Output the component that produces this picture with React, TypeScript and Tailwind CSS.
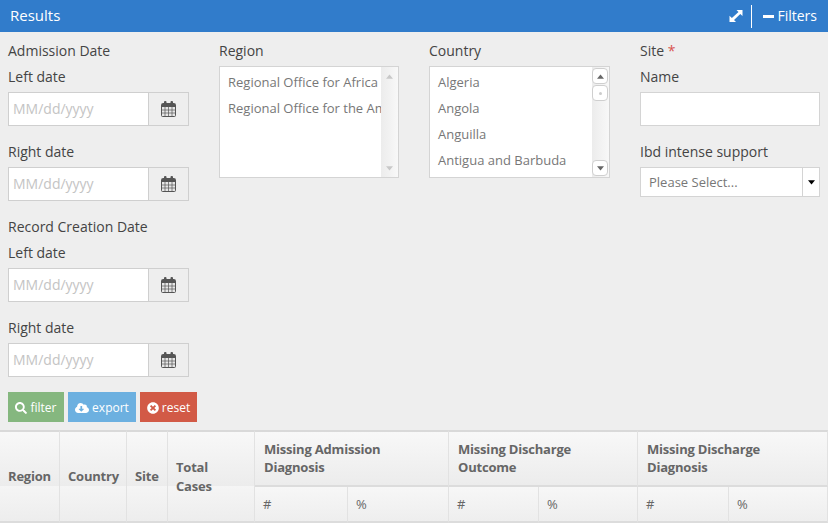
import { FaCloudDownloadAlt, FaSearch, FaTimesCircle } from "react-icons/fa";

function CalendarIcon() {
  return (
    <svg width="15" height="16" viewBox="0 0 15 16" className="text-[#555]">
      <rect x="0.5" y="2.5" width="14" height="13" rx="1" fill="#e6e6e6" stroke="currentColor" />
      <rect x="1" y="3" width="13" height="3" fill="currentColor" />
      <rect x="3" y="0" width="2.5" height="5" rx="1" fill="currentColor" />
      <rect x="9.5" y="0" width="2.5" height="5" rx="1" fill="currentColor" />
      <path d="M4 6v9M7.5 6v9M11 6v9M1 9h13M1 12h13" stroke="currentColor" strokeOpacity="0.7" strokeWidth="1" fill="none" />
    </svg>
  );
}

function Caret({ up, className, width = 7 }: { up?: boolean; className?: string; width?: number }) {
  return (
    <svg width={width} height="5" viewBox="0 0 9 6" fill="currentColor" className={className}>
      <path d={up ? "M4.5 0.5L9 6H0z" : "M0 0h9L4.5 5.5z"} />
    </svg>
  );
}

function DateField({ label }: { label: string }) {
  return (
    <div className="mb-4">
      <div className="mb-[5px] h-5 leading-5">{label}</div>
      <div className="flex h-[34px] border border-[#cfcfcf]">
        <div className="flex-1 bg-white px-[4px] leading-[32px] text-[#c4c4c4]">MM/dd/yyyy</div>
        <div className="flex w-10 items-center justify-center border-l border-[#cfcfcf]">
          <CalendarIcon />
        </div>
      </div>
    </div>
  );
}

function ListBox({ items, active }: { items: string[]; active?: boolean }) {
  return (
    <div className="flex h-[112px] border border-[#d4d4d4] bg-white">
      <div className="min-w-0 flex-1 overflow-hidden px-2 pt-[3px] text-[13px] text-[#777]">
        {items.map((item) => (
          <div key={item} className="h-[26px] whitespace-nowrap leading-[25px]">{item}</div>
        ))}
      </div>
      <div className="flex w-[17px] flex-col items-center justify-between bg-gradient-to-r from-[#ececec] to-[#f8f8f8] py-px pr-px">
        {active ? (
          <>
            <div className="flex w-full flex-col gap-px">
              <div className="flex h-4 items-center justify-center rounded-sm border border-[#cfcfcf] bg-white text-[#666]"><Caret up /></div>
              <div className="flex h-4 items-center justify-center rounded-sm border border-[#cfcfcf] bg-white"><span className="h-[3px] w-[3px] rounded-full bg-[#ccc]" /></div>
            </div>
            <div className="flex h-4 w-full items-center justify-center rounded-sm border border-[#cfcfcf] bg-white text-[#666]"><Caret /></div>
          </>
        ) : (
          <>
            <div className="flex h-4 items-center justify-center text-[#c8c8c8]"><Caret up /></div>
            <div className="flex h-4 items-center justify-center text-[#c8c8c8]"><Caret /></div>
          </>
        )}
      </div>
    </div>
  );
}

const tallCell =
  "border-t-2 border-r border-b-2 border-t-[#d9d9d9] border-r-[#e2e2e2] border-b-[#dcdcdc] bg-[linear-gradient(#f8f8f8,#ececec_54px,#f5f5f5_54px,#ededed)] px-2 text-left align-middle font-bold leading-[19px] tracking-[-0.2px] text-[#666]";
const groupCell =
  "h-[57px] border-t-2 border-r border-b-2 border-t-[#d9d9d9] border-r-[#e2e2e2] border-b-[#dcdcdc] bg-gradient-to-b from-[#f8f8f8] to-[#ececec] pb-px pl-[9px] pr-2 text-left align-middle font-bold leading-[18px] tracking-[-0.2px] text-[#666]";
const subCell =
  "h-[36px] border-r border-b-2 border-r-[#e2e2e2] border-b-[#dcdcdc] bg-gradient-to-b from-[#f7f7f7] to-[#eeeeee] pl-2 text-left align-middle font-normal text-[#666]";

export default function App() {
  return (
    <div className="h-[523px] w-[828px] overflow-hidden bg-[#eeeeee] font-['Open_Sans',sans-serif] text-sm text-[#444]">
      <div className="flex h-8 items-center justify-between bg-[#317ccb] pl-[10px] pr-[11px] text-white">
        <span className="text-[15px]">Results</span>
        <div className="flex items-center">
          <svg width="14" height="14" viewBox="0 0 14 14" fill="white" className="mr-2">
            <path d="M7.5 1H13.5V7L11.3 4.9 5 11 7 13H.5V6.8L2.9 9 9.5 3z" />
          </svg>
          <span className="mr-[11px] h-[23px] w-px bg-white" />
          <span className="mr-[3px] h-[3px] w-[11px] bg-white" />
          <span>Filters</span>
        </div>
      </div>

      <div className="grid grid-cols-[181px_180px_181px_180px] gap-x-[30px] pl-2 pt-[9px]">
        <div>
          <div className="mb-[6px] h-5 leading-5">Admission Date</div>
          <DateField label="Left date" />
          <DateField label="Right date" />
          <div className="mb-[6px] h-5 leading-5">Record Creation Date</div>
          <DateField label="Left date" />
          <DateField label="Right date" />
        </div>
        <div>
          <div className="mb-[5px] h-5 leading-5">Region</div>
          <ListBox items={["Regional Office for Africa", "Regional Office for the Americas"]} />
        </div>
        <div>
          <div className="mb-[5px] h-5 leading-5">Country</div>
          <ListBox active items={["Algeria", "Angola", "Anguilla", "Antigua and Barbuda"]} />
        </div>
        <div>
          <div className="mb-[6px] h-5 leading-5">
            Site <span className="text-[#d9534f]">*</span>
          </div>
          <div className="mb-[5px] h-5 leading-5">Name</div>
          <div className="mb-4 h-[34px] border border-[#d4d4d4] bg-white" />
          <div className="mb-[5px] h-5 leading-5">Ibd intense support</div>
          <div className="flex h-[30px] border border-[#d4d4d4] bg-white">
            <div className="flex-1 px-2 text-[13px] leading-[28px] text-[#777]">Please Select...</div>
            <div className="flex w-[17px] items-center justify-center border-l border-[#d4d4d4] text-black">
              <Caret />
            </div>
          </div>
        </div>
      </div>

      <div className="-mt-px flex gap-1 pl-2 text-xs text-white">
        <button className="flex h-[30px] w-14 items-center justify-center gap-[3px] bg-[#85b77f] pt-px"><FaSearch size={12} />filter</button>
        <button className="flex h-[30px] w-[68px] items-center justify-center gap-[3px] bg-[#6cb0e0] pt-px"><FaCloudDownloadAlt size={14} />export</button>
        <button className="flex h-[30px] w-[57px] items-center justify-center gap-[3px] bg-[#d25a46] pt-px"><FaTimesCircle size={12} />reset</button>
      </div>

      <table className="mt-2 w-[828px] table-fixed border-separate border-spacing-0 text-[13px]">
        <colgroup>
          <col className="w-[60px]" />
          <col className="w-[67px]" />
          <col className="w-[41px]" />
          <col className="w-[87px]" />
          <col className="w-[93px]" />
          <col className="w-[101px]" />
          <col className="w-[90px]" />
          <col className="w-[99px]" />
          <col className="w-[91px]" />
          <col className="w-[99px]" />
        </colgroup>
        <thead>
          <tr>
            <th rowSpan={2} className={tallCell}>Region</th>
            <th rowSpan={2} className={tallCell}>Country</th>
            <th rowSpan={2} className={tallCell}>Site</th>
            <th rowSpan={2} className={tallCell}>Total Cases</th>
            <th colSpan={2} className={groupCell}>Missing Admission Diagnosis</th>
            <th colSpan={2} className={groupCell}>Missing Discharge Outcome</th>
            <th colSpan={2} className={groupCell}>Missing Discharge Diagnosis</th>
          </tr>
          <tr>
            <th className={subCell}>#</th>
            <th className={subCell}>%</th>
            <th className={subCell}>#</th>
            <th className={subCell}>%</th>
            <th className={subCell}>#</th>
            <th className={subCell}>%</th>
          </tr>
        </thead>
      </table>
    </div>
  );
}
